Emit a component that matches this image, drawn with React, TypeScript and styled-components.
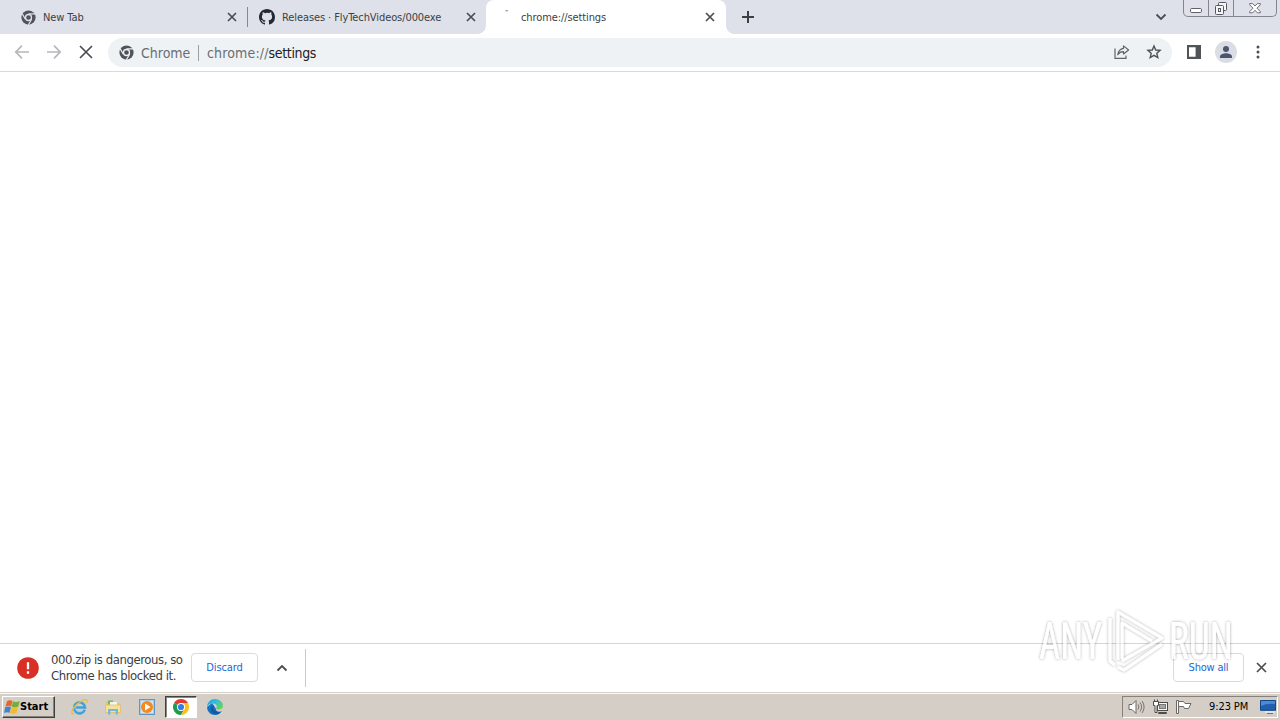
import React from 'react';
import styled, { createGlobalStyle } from 'styled-components';

const GlobalStyle = createGlobalStyle`
  * { box-sizing: border-box; }
  html, body { margin: 0; padding: 0; }
  body { width: 1280px; height: 720px; overflow: hidden; background: #fff; }
  svg { display: block; flex: none; overflow: visible; }
  button { font: inherit; padding: 0; margin: 0; border: 0; background: none; }
`;

const Screen = styled.div`
  position: relative;
  display: flex;
  flex-direction: column;
  width: 1280px;
  height: 720px;
  overflow: hidden;
  font-family: Tahoma, 'DejaVu Sans Condensed', 'DejaVu Sans', sans-serif;
  font-stretch: condensed;
  font-size: 11px;
`;

const Label = styled.span<{ $size?: number; $color?: string; $spacing?: number; $weight?: number }>`
  white-space: nowrap;
  font-size: ${p => p.$size ?? 11}px;
  color: ${p => p.$color ?? '#3c4043'};
  letter-spacing: ${p => p.$spacing ?? 0}px;
  font-weight: ${p => p.$weight ?? 400};
`;

const TabStrip = styled.header`
  display: flex;
  height: 34px;
  background: #dee1e9;
`;

const Tab = styled.div<{ $width: number; $inset: number; $active?: boolean }>`
  position: relative;
  display: flex;
  align-items: center;
  width: ${p => p.$width}px;
  height: 34px;
  padding: 0 ${p => (p.$active ? 12 : 11)}px 0 ${p => p.$inset}px;
  background: ${p => (p.$active ? '#fff' : 'transparent')};
  border-radius: 8px 8px 0 0;
  &::before, &::after {
    content: '';
    display: ${p => (p.$active ? 'block' : 'none')};
    position: absolute;
    bottom: 0;
    width: 8px;
    height: 8px;
  }
  &::before { left: -8px; background: radial-gradient(circle at 0 0, transparent 7.5px, #fff 8px); }
  &::after { right: -8px; background: radial-gradient(circle at 100% 0, transparent 7.5px, #fff 8px); }
`;

const TabIcon = styled.span`
  display: flex;
  justify-content: center;
  width: 16px;
  margin-right: 7px;
`;

const TabTitle = styled(Label)`
  flex: 1;
  line-height: 16px;
  padding-top: 1px;
`;

const TabDivider = styled.span`
  align-self: center;
  width: 1px;
  height: 20px;
  background: #85888f;
`;

const IconButton = styled.button<{ $width: number }>`
  display: flex;
  align-items: center;
  justify-content: center;
  width: ${p => p.$width}px;
  height: 100%;
`;

const StripEnd = styled.div`
  display: flex;
  margin-left: auto;
`;

const WindowControls = styled.div`
  display: flex;
  width: 94px;
  height: 17px;
  margin: 0 3px 0 12px;
  border: 1px solid #84868c;
  border-top: 0;
  border-radius: 0 0 5px 5px;
`;

const WindowControl = styled.button<{ $width: number }>`
  display: flex;
  justify-content: center;
  width: ${p => p.$width}px;
  height: 16px;
  & + & { border-left: 1px solid #84868c; }
`;

const Toolbar = styled.nav`
  display: flex;
  align-items: center;
  height: 38px;
  padding: 0 6px;
  background: #fff;
  border-bottom: 1px solid #d9dadd;
`;

const NavButton = styled(IconButton)`
  padding-bottom: 1px;
`;

const AddressBar = styled.div`
  display: flex;
  align-items: center;
  width: 1064px;
  height: 29px;
  margin: 0 6px;
  padding: 0 2px 0 11px;
  border-radius: 15px;
  background: #eff2f5;
`;

const AddressDivider = styled.span`
  width: 1px;
  height: 16px;
  margin: 0 8px 0 7px;
  background: #9a9da1;
`;

const SiteChip = styled.span`
  display: flex;
  width: 50px;
  margin-left: 7px;
`;

const Avatar = styled.span`
  display: flex;
  align-items: center;
  justify-content: center;
  width: 22px;
  height: 22px;
  border-radius: 50%;
  background: #dadee4;
`;

const AddressActions = styled.div`
  display: flex;
  margin-left: auto;
`;

const Page = styled.main`
  flex: 1;
  background: #fff;
`;

const Shelf = styled.footer`
  display: flex;
  align-items: center;
  height: 50px;
  padding: 0 2px 2px 17px;
  border-top: 1px solid #d4d5d7;
  background: #fff;
`;

const Warning = styled.div`
  display: flex;
  flex-direction: column;
  width: 140px;
  margin-left: 12px;
  line-height: 16px;
`;

const OutlineButton = styled.button<{ $width: number }>`
  display: flex;
  align-items: center;
  justify-content: center;
  width: ${p => p.$width}px;
  height: 29px;
  padding-bottom: 1px;
  border: 1px solid #d9dbdf;
  border-radius: 4px;
  background: #fff;
`;

const ShelfDivider = styled.span`
  width: 1px;
  height: 38px;
  background: #c8cacd;
`;

const ShelfEnd = styled.div`
  display: flex;
  align-items: center;
  margin-left: auto;
`;

const Taskbar = styled.div`
  display: flex;
  align-items: center;
  height: 27px;
  padding: 2px 2px 2px 2px;
  background: #d5cec7;
  box-shadow: inset 0 1px #fbfaf9, 0 -1px #d5cec7;
`;

const StartButton = styled.button`
  display: flex;
  align-items: center;
  width: 53px;
  height: 22px;
  padding-left: 1px;
  border: 1px solid;
  border-color: #fff #404040 #404040 #fff;
  box-shadow: inset -1px -1px #86817c;
  background: #d5cec7;
`;

const Launchers = styled.div`
  display: flex;
  margin-left: 8px;
`;

const Launcher = styled.button<{ $active?: boolean }>`
  display: flex;
  align-items: center;
  justify-content: center;
  width: 32px;
  height: 22px;
  margin-right: 2px;
  border: 1px solid;
  border-color: ${p => (p.$active ? '#404040 #fff #fff #404040' : 'transparent')};
  box-shadow: ${p => (p.$active ? 'inset 1px 1px #8a8681' : 'none')};
  background: ${p => (p.$active ? '#fff' : 'transparent')};
`;

const Tray = styled.div`
  display: flex;
  align-items: center;
  width: 156px;
  height: 22px;
  margin-left: auto;
  padding-left: 5px;
  border: 1px solid;
  border-color: #85817c #fff #fff #85817c;
`;

const TrayIcons = styled.div`
  display: flex;
  gap: 7px;
  width: 81px;
`;

const Clock = styled.div`
  width: 51px;
`;

const Watermark = styled.svg`
  position: absolute;
  left: 1030px;
  top: 603px;
  pointer-events: none;
`;

const ChromeMono = ({ hole = '#dee1e9' }: { hole?: string }) => (
  <svg width="15" height="15" viewBox="0 0 16 16">
    <circle cx="8" cy="8" r="7.6" fill="#50545a" />
    <circle cx="8" cy="8" r="3.2" fill="#50545a" stroke={hole} strokeWidth="1.4" />
    <path d="M8 4.2h7M4.7 9.9 1.2 3.9M11.3 9.9 7.8 16" stroke={hole} strokeWidth="1.3" />
  </svg>
);

const ChromeColor = () => (
  <svg width="16" height="16" viewBox="0 0 16 16">
    <path d="M8 8 1.07 4A8 8 0 0 1 14.93 4Z" fill="#e33b2e" />
    <path d="M8 8 1.07 4A8 8 0 0 0 8 16l3.5-6Z" fill="#219a50" />
    <path d="M8 4h6.93A8 8 0 0 1 8 16l3.5-6Z" fill="#fbc116" />
    <circle cx="8" cy="8" r="4" fill="#fff" />
    <circle cx="8" cy="8" r="3.1" fill="#397be6" />
  </svg>
);

const GitHub = () => (
  <svg width="16" height="16" viewBox="0 0 16 16" fill="#252a32">
    <path d="M8 0C3.58 0 0 3.58 0 8c0 3.54 2.29 6.53 5.47 7.59.4.07.55-.17.55-.38 0-.19-.01-.82-.01-1.49-2.01.37-2.53-.49-2.69-.94-.09-.23-.48-.94-.82-1.13-.28-.15-.68-.52-.01-.53.63-.01 1.08.58 1.23.82.72 1.21 1.87.87 2.33.66.07-.52.28-.87.51-1.07-1.78-.2-3.64-.89-3.64-3.95 0-.87.31-1.59.82-2.15-.08-.2-.36-1.02.08-2.12 0 0 .67-.21 2.2.82A7.7 7.7 0 0 1 8 3.86c.68 0 1.36.09 2 .27 1.53-1.04 2.2-.82 2.2-.82.44 1.1.16 1.92.08 2.12.51.56.82 1.27.82 2.15 0 3.07-1.87 3.75-3.65 3.95.29.25.54.73.54 1.48 0 1.07-.01 1.93-.01 2.2 0 .21.15.46.55.38A8.01 8.01 0 0 0 16 8c0-4.42-3.58-8-8-8Z" />
  </svg>
);

const Cross = ({ size = 8, width = 1.7, color = '#4a4d52' }: { size?: number; width?: number; color?: string }) => (
  <svg width={size} height={size} viewBox={`0 0 ${size} ${size}`}>
    <path d={`M0 0 ${size} ${size}M${size} 0 0 ${size}`} stroke={color} strokeWidth={width} />
  </svg>
);

const Arrow = ({ flip }: { flip?: boolean }) => (
  <svg width="14" height="14" viewBox="0 0 14 14" fill="none" stroke="#b5b7ba" strokeWidth="1.7">
    <path d={flip ? 'M0 7h13M7 .7 13.2 7 7 13.3' : 'M14 7H1M7 .7.8 7 7 13.3'} />
  </svg>
);

const Chevron = ({ up }: { up?: boolean }) => (
  <svg width="10" height="6" viewBox="0 0 10 6" fill="none" stroke="#4a4d52" strokeWidth="1.8">
    <path d={up ? 'M.5 5.5 5 1l4.5 4.5' : 'M.5.5 5 5 9.5.5'} />
  </svg>
);

const Share = () => (
  <svg width="16" height="14" viewBox="0 0 16 14" fill="none" stroke="#5f6368" strokeWidth="1.2">
    <path d="M1 3.5v9.9h11V10.5" />
    <path d="M9.5.9 14.6 5 9.5 9V6.7C7 6.6 5.2 7.5 3.8 9.8 4.2 6 6.2 3.8 9.5 3.3Z" strokeLinejoin="round" />
  </svg>
);

const Star = () => (
  <svg width="14" height="14" viewBox="0 0 14 14" fill="none" stroke="#4d5156" strokeWidth="1.4">
    <path d="m7 1 1.7 4 4.4.4-3.3 2.9 1 4.3L7 10.3l-3.8 2.3 1-4.3L.9 5.4 5.3 5Z" />
  </svg>
);

const SidePanel = () => (
  <svg width="14" height="14" viewBox="0 0 14 14">
    <path d="M0 0h14v14H0ZM2 2.3v9.4h6.6V2.3Z" fill="#505358" fillRule="evenodd" />
  </svg>
);

const Person = () => (
  <svg width="12" height="12" viewBox="0 0 12 12" fill="#4b5670">
    <circle cx="6" cy="3" r="3" />
    <path d="M0 12v-1.6C0 8.2 3.8 7.2 6 7.2s6 1 6 3.2V12Z" />
  </svg>
);

const Dots = () => (
  <svg width="4" height="14" viewBox="0 0 4 14" fill="#4b4e53">
    <circle cx="2" cy="2" r="1.5" /><circle cx="2" cy="7" r="1.5" /><circle cx="2" cy="12" r="1.5" />
  </svg>
);

const Minimize = () => (
  <svg width="12" height="16" viewBox="0 0 12 16">
    <rect x=".5" y="8.5" width="11" height="4" rx="1.3" fill="#fff" stroke="#5f6268" />
  </svg>
);

const Restore = () => (
  <svg width="14" height="16" viewBox="0 0 14 16" fill="#f5f6f8" stroke="#55585e">
    <rect x="4.5" y="2.5" width="8" height="8" rx="1" />
    <rect x="1.5" y="5.5" width="8" height="9" rx="1" />
    <rect x="4.5" y="8.5" width="2" height="3" />
  </svg>
);

const CloseWindow = () => (
  <svg width="12" height="16" viewBox="0 0 12 16">
    <path d="M.7 3.6h3L6 6l2.3-2.4h3v1.2L8 8.2l3.3 3.4v1.2h-3L6 10.3l-2.3 2.5h-3v-1.2L4 8.2.7 4.8Z" fill="#fff" stroke="#5e6167" strokeWidth=".9" />
  </svg>
);

const Alert = () => (
  <svg width="22" height="22" viewBox="0 0 22 22">
    <circle cx="11" cy="11" r="10.8" fill="#d93025" />
    <path d="M11 5.3v7M11 14.3v2.4" stroke="#fff" strokeWidth="2.3" />
  </svg>
);

const WindowsFlag = () => (
  <svg width="16" height="16" viewBox="0 0 16 16">
    <path d="M3 2.3C5 .8 6.9 1.2 8.5 2L7.2 7.5C5.4 6.6 3.5 6.5 1.4 7.7Z" fill="#e7662d" />
    <path d="M9 2.3c2.2 1 4.4.9 6.8-.4l-1.5 5.7c-2.2 1.2-4.4 1.2-6.6.2Z" fill="#77ad3a" />
    <path d="M1.2 8.3c2-1.2 3.8-1.1 5.8-.1l-1.5 5.6C3.6 12.9 1.8 13 0 14Z" fill="#4384c9" />
    <path d="M7.6 8.5c2.2 1 4.3.9 6.5-.3l-1.4 5.5c-2.2 1.3-4.5 1.2-6.6.2Z" fill="#efbd2d" />
  </svg>
);

const Explorer = () => (
  <svg width="17" height="16" viewBox="0 0 17 16" fill="none">
    <path d="M13.8 10.7A5.5 5.5 0 1 1 14.1 8.4H5.2" stroke="#3ea2dc" strokeWidth="2.5" />
    <path d="M12.2 11A4.8 4.8 0 0 1 4 9.7" stroke="#83cdf2" strokeWidth=".8" />
    <path d="M2.7 15C-.7 15.4.7 10.5 4.9 6.3 9.3 1.9 15-.9 16 1.4c.3.8 0 1.8-.6 2.8" stroke="#e5bc4c" strokeWidth="1.3" />
  </svg>
);

const Folder = () => (
  <svg width="16" height="16" viewBox="0 0 16 16">
    <path d="M1 2h6l1 2h7v10H1Z" fill="#e6c967" />
    <path d="M3 1.5h5v4H3Z" fill="#70b870" /><path d="M5 3h7v4H5Z" fill="#f6f5e8" />
    <path d="M.5 6h15v7.5H.5Z" fill="#f5e19a" stroke="#d6b65b" strokeWidth=".6" />
    <path d="M3 15.5V10h10v5.5h-2.4V12H5.4v3.5Z" fill="#75b8df" />
  </svg>
);

const MediaPlayer = () => (
  <svg width="16" height="16" viewBox="0 0 16 16">
    <rect x=".5" y=".5" width="15" height="15" fill="#a9cbe6" stroke="#6098c3" />
    <rect x="2" y="2" width="12" height="12" fill="#d6e5ef" />
    <circle cx="8" cy="8" r="6" fill="#f28a1d" /><path d="m6 4.5 5.6 3.5L6 11.5Z" fill="#fff" />
  </svg>
);

const Edge = () => (
  <svg width="16" height="16" viewBox="0 0 16 16">
    <defs>
      <linearGradient id="wave" x1="0" y1="0" x2="1" y2=".6"><stop stopColor="#209bd8" /><stop offset=".5" stopColor="#32bddd" /><stop offset="1" stopColor="#65d35b" /></linearGradient>
    </defs>
    <path d="M.1 8C0 12.5 3.6 16 8 16c3 0 5.4-1.5 6.8-3.9-2.5 1.2-6.1.7-6-2.7L5 4Z" fill="#1572c2" />
    <path d="M0 8C.2 3.4 3.6 0 8 0s8 3 8 6.5c0 2.5-1.8 4.1-4.2 4.1-1.7 0-2.7-.6-2.7-1.2 0-.5.7-.7.7-2C9.8 5.5 8 4.4 5.7 4.4 2.8 4.4.7 6 0 8Z" fill="url(#wave)" />
    <path d="M7 6.6C5.4 9.8 7.2 13.4 13.8 13.2 11 16.6 4.3 15.6 3.7 11 3.5 8.7 5 7 7 6.6Z" fill="#125aa5" />
  </svg>
);

const Volume = () => (
  <svg width="17" height="16" viewBox="0 0 17 16" fill="none" stroke="#77736f">
    <path d="M1 5.5h3l4-4v13l-4-4H1Z" fill="#fff" stroke="#6b6865" />
    <path d="M10 5.4q1.8 2.6 0 5.2M12 3.5q3.3 4.5 0 9M14.1 2q4 6 0 12" />
  </svg>
);

const Network = () => (
  <svg width="17" height="16" viewBox="0 0 17 16" stroke="#4e4b49">
    <rect x="5.5" y="3.5" width="10" height="8" fill="#f8f8f8" />
    <rect x="7.5" y="5.5" width="6" height="4" fill="#aaa6a2" stroke="#777" />
    <path d="M6.5 14.5h8v-1h-8Z" fill="#fff" />
    <path d="M1.5 2.5h5v4h-1.5v7h-2v-7H1.5ZM2.5 2.5V.5M5.5 2.5V.5" fill="#fff" />
  </svg>
);

const Flag = () => (
  <svg width="16" height="16" viewBox="0 0 16 16" stroke="#6b6865">
    <path d="M.5 1.5h2v13h-2Z" fill="#fff" />
    <path d="M2.5 2.5h5l1.5 2h6l-2.5 5h-4l-1-2h-5Z" fill="#fff" />
  </svg>
);

const Desktop = () => (
  <svg width="17" height="14" viewBox="0 0 17 14">
    <path d="M.5.5h15v9.8H.5Z" fill="#225dae" stroke="#12458e" />
    <path d="M1 6Q7 3 15 4V1H1Z" fill="#4d8bd1" /><path d="M5 12h10" stroke="#e1e4e6" strokeWidth="2" /><path d="M7 13.5h6" stroke="#617386" />
  </svg>
);

const Spinner = () => (
  <svg width="16" height="16" viewBox="0 0 16 16">
    <path d="M7.5 2q1-.7 2.5-.1" stroke="#aaadb2" strokeWidth="1.5" fill="none" />
  </svg>
);

export default function App() {
  return (
    <Screen>
      <GlobalStyle />
      <TabStrip>
        <Tab $width={247} $inset={20}>
          <TabIcon><ChromeMono /></TabIcon>
          <TabTitle $spacing={-0.1}>New Tab</TabTitle>
          <Cross />
        </Tab>
        <TabDivider />
        <Tab $width={238} $inset={11}>
          <TabIcon><GitHub /></TabIcon>
          <TabTitle $spacing={-0.09}>Releases · FlyTechVideos/000exe</TabTitle>
          <Cross />
        </Tab>
        <Tab $width={240} $inset={12} $active>
          <TabIcon><Spinner /></TabIcon>
          <TabTitle $spacing={-0.1}>chrome://settings</TabTitle>
          <Cross />
        </Tab>
        <IconButton $width={44}>
          <svg width="12" height="12" viewBox="0 0 12 12"><path d="M6 0v12M0 6h12" stroke="#3c4043" strokeWidth="2" /></svg>
        </IconButton>
        <StripEnd>
          <IconButton $width={20}><Chevron /></IconButton>
          <WindowControls>
            <WindowControl $width={24}><Minimize /></WindowControl>
            <WindowControl $width={25}><Restore /></WindowControl>
            <WindowControl $width={42}><CloseWindow /></WindowControl>
          </WindowControls>
        </StripEnd>
      </TabStrip>
      <Toolbar>
        <NavButton $width={32}><Arrow /></NavButton>
        <NavButton $width={32}><Arrow flip /></NavButton>
        <NavButton $width={32}><Cross size={12} width={1.7} /></NavButton>
        <AddressBar>
          <ChromeMono hole="#eff2f5" />
          <SiteChip><Label $size={14} $color="#6a6e73">Chrome</Label></SiteChip>
          <AddressDivider />
          <Label $size={14} $color="#6a6e73" $spacing={0.15}>chrome://</Label>
          <Label $size={14} $color="#202124" $spacing={-0.35}>settings</Label>
          <AddressActions>
            <NavButton $width={32}><Share /></NavButton>
            <NavButton $width={32}><Star /></NavButton>
          </AddressActions>
        </AddressBar>
        <NavButton $width={32}><SidePanel /></NavButton>
        <NavButton $width={32}><Avatar><Person /></Avatar></NavButton>
        <NavButton $width={32}><Dots /></NavButton>
      </Toolbar>
      <Page />
      <Shelf>
        <Alert />
        <Warning>
          <Label $size={13} $spacing={-0.44}>000.zip is dangerous, so</Label>
          <Label $size={13} $spacing={-0.43}>Chrome has blocked it.</Label>
        </Warning>
        <OutlineButton $width={67}><Label $color="#1a67d2" $spacing={-0.1}>Discard</Label></OutlineButton>
        <IconButton $width={47}><Chevron up /></IconButton>
        <ShelfDivider />
        <ShelfEnd>
          <OutlineButton $width={71}><Label $color="#1a67d2" $spacing={-0.2}>Show all</Label></OutlineButton>
          <IconButton $width={34}><Cross size={9} /></IconButton>
        </ShelfEnd>
      </Shelf>
      <Taskbar>
        <StartButton><WindowsFlag /><Label $color="#000" $weight={700} $spacing={0}>Start</Label></StartButton>
        <Launchers>
          <Launcher><Explorer /></Launcher>
          <Launcher><Folder /></Launcher>
          <Launcher><MediaPlayer /></Launcher>
          <Launcher $active><ChromeColor /></Launcher>
          <Launcher><Edge /></Launcher>
        </Launchers>
        <Tray>
          <TrayIcons><Volume /><Network /><Flag /></TrayIcons>
          <Clock><Label $color="#000" $spacing={-0.1}>9:23 PM</Label></Clock>
          <Desktop />
        </Tray>
      </Taskbar>
      <Watermark width="210" height="76" viewBox="0 0 210 76">
        <defs>
          <filter id="halo" x="-20%" y="-20%" width="140%" height="140%">
            <feDropShadow dx="0" dy="0" stdDeviation="1.8" floodColor="#000" floodOpacity=".5" />
          </filter>
        </defs>
        <g filter="url(#halo)" fill="#fff" opacity=".72" fontFamily="Roboto, sans-serif" fontSize="51">
          <text x="9" y="56" textLength="63" lengthAdjust="spacingAndGlyphs">ANY</text>
          <text x="139" y="56" textLength="64" lengthAdjust="spacingAndGlyphs">RUN</text>
          <path d="M80 15v43l5 4M88 57V9l44 26-40 23M92 56V20l30 18M88 64l6 3 38-26" fill="none" stroke="#fff" strokeWidth="3" strokeLinejoin="round" />
        </g>
      </Watermark>
    </Screen>
  );
}
